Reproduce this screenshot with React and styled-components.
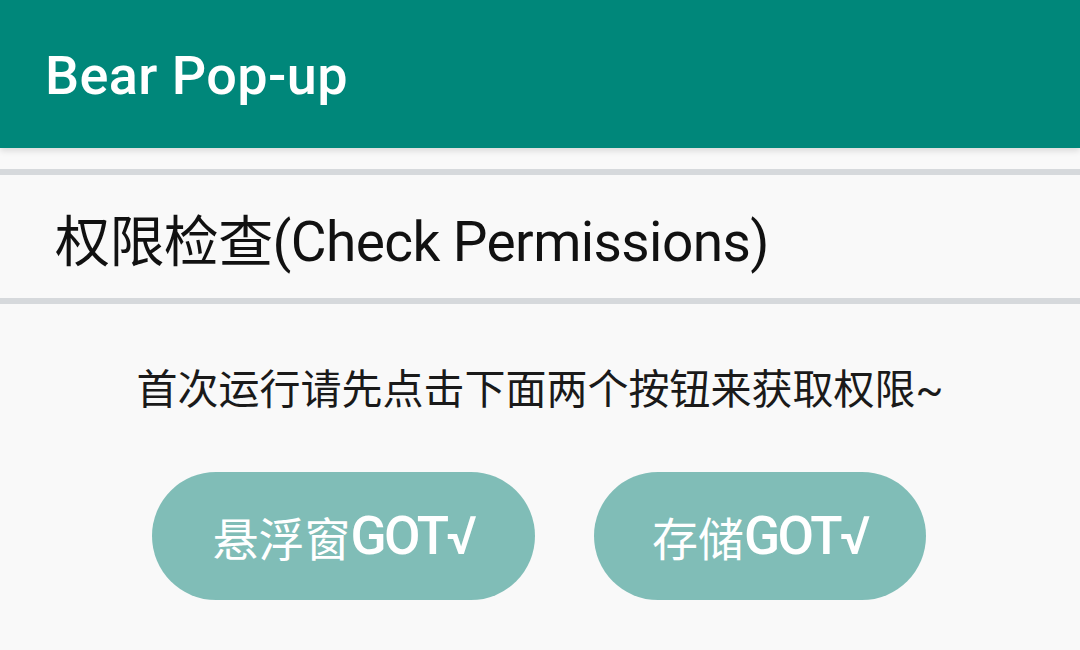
import React from "react";
import styled, { createGlobalStyle } from "styled-components";

// Page reset and base font
const GlobalStyle = createGlobalStyle`
	body {
		margin: 0;
		background: #f9f9f9;
		font-family: Roboto, "Noto Sans CJK SC", sans-serif;
	}
`;

const Page = styled.div`
	width: 1080px;
	height: 650px;
	background: #f9f9f9;
	overflow: hidden;
`;

// Teal app bar
const AppBar = styled.header`
	height: 148px;
	background: #00877a;
	display: flex;
	align-items: center;
	padding-left: 45px;
	box-shadow: 0 3px 6px rgba(0, 0, 0, 0.12);
	position: relative;
`;

const Title = styled.h1`
	margin: 0;
	margin-top: 2px;
	color: #ffffff;
	font-family: Roboto, sans-serif;
	font-weight: 500;
	font-size: 54px;
	letter-spacing: 0.4px;
`;

// Section header row with dividers above and below
const SectionRow = styled.div`
	margin-top: 21px;
	height: 123px;
	border-top: 6px solid #d6d9dc;
	border-bottom: 6px solid #d6d9dc;
	display: flex;
	align-items: center;
	padding-left: 55px;
`;

const SectionTitle = styled.span`
	font-family: Roboto, "Noto Sans CJK SC", sans-serif;
	font-size: 55px;
	color: #111;
	letter-spacing: -0.6px;
`;

const Description = styled.p`
	margin: 63px 0 0;
	text-align: center;
	font-family: Roboto, "Noto Sans CJK SC", sans-serif;
	font-size: 41px;
	line-height: 46px;
	color: #1a1a1a;
`;

const ButtonRow = styled.div`
	display: flex;
	justify-content: center;
	gap: 59px;
	margin-top: 59px;
	padding-right: 2px;
`;

const PillButton = styled.button`
	width: ${props => props.width}px;
	height: 128px;
	border: none;
	border-radius: 64px;
	background: #80bdb7;
	color: #ffffff;
	font-family: Roboto, "Noto Sans CJK SC", sans-serif;
	font-weight: 400;
	font-size: 46px;
	display: flex;
	align-items: center;
	justify-content: center;
	padding: 0;
	cursor: pointer;
`;

// Latin "GOT√" part of the button label, heavier and tighter
const Got = styled.span`
	font-family: Roboto, sans-serif;
	font-weight: 500;
	font-size: 53px;
	letter-spacing: -2.5px;
`;

export default function App() {
	return (
		<Page>
			<GlobalStyle />
			<AppBar>
				<Title>Bear Pop-up</Title>
			</AppBar>
			<SectionRow>
				<SectionTitle>权限检查(Check Permissions)</SectionTitle>
			</SectionRow>
			<Description>首次运行请先点击下面两个按钮来获取权限~</Description>
			<ButtonRow>
				<PillButton width={383}>
					悬浮窗<Got>GOT√</Got>
				</PillButton>
				<PillButton width={332}>
					存储<Got>GOT√</Got>
				</PillButton>
			</ButtonRow>
		</Page>
	);
}
